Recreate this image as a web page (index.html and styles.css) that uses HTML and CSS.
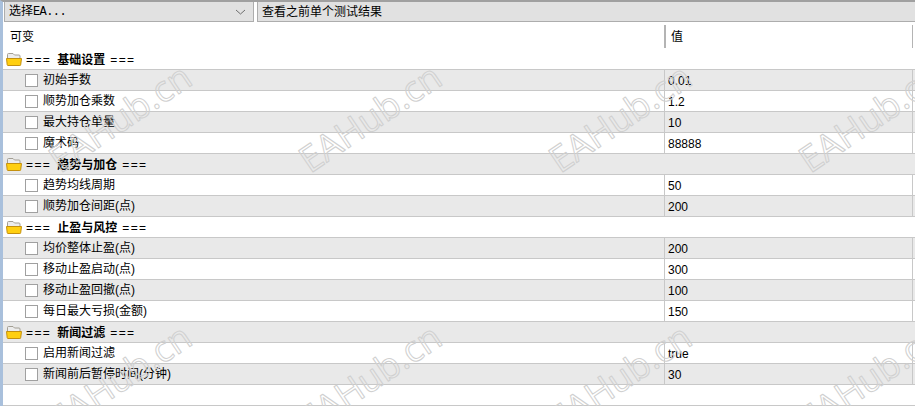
FILE: index.html
```html
<!DOCTYPE html>
<html lang="zh-CN">
<head>
<meta charset="utf-8">
<title>EA</title>
<link rel="stylesheet" href="styles.css">
</head>
<body>
<svg width="0" height="0" class="defs">
  <symbol id="folder" viewBox="0 0 16 13">
    <path d="M1.500 7V1.500a1 1 0 0 1 1-1h4.500l1.500 1.500h4.500a1 1 0 0 1 1 1V7" fill="#ececec" stroke="#a39f94"/>
    <path d="M.5 5.500h15l-.8 6.200a.8.8 0 0 1-.8.8H2a.8.8 0 0 1-.8-.7z" fill="#ffcf10" stroke="#c4900e"/>
  </symbol>
</svg>
<div class="app">
  <div class="toolbar">
    <div class="combo combo-ea"><span>选择<span class="mono">EA...</span></span>
      <svg class="chev" width="11" height="6" viewBox="0 0 11 6"><path d="M1 1l4.500 4L10 1" fill="none" stroke="#6e6e6e"/></svg>
    </div>
    <div class="combo combo-result"><span>查看之前单个测试结果</span></div>
  </div>
  <div class="head">
    <div class="head-name">可变</div>
    <div class="head-val">值</div>
  </div>
  <div class="grid">
    <div class="row group"><svg class="folder"><use href="#folder"/></svg><span class="eq">===</span><b>基础设置</b><span class="eq">===</span></div>
    <div class="row alt"><div class="name"><i class="check"></i>初始手数</div><div class="val">0.01</div></div>
    <div class="row"><div class="name"><i class="check"></i>顺势加仓乘数</div><div class="val">1.2</div></div>
    <div class="row alt"><div class="name"><i class="check"></i>最大持仓单量</div><div class="val">10</div></div>
    <div class="row"><div class="name"><i class="check"></i>魔术码</div><div class="val">88888</div></div>
    <div class="row group alt"><svg class="folder"><use href="#folder"/></svg><span class="eq">===</span><b>趋势与加仓</b><span class="eq">===</span></div>
    <div class="row"><div class="name"><i class="check"></i>趋势均线周期</div><div class="val">50</div></div>
    <div class="row alt"><div class="name"><i class="check"></i>顺势加仓间距(点)</div><div class="val">200</div></div>
    <div class="row group"><svg class="folder"><use href="#folder"/></svg><span class="eq">===</span><b>止盈与风控</b><span class="eq">===</span></div>
    <div class="row alt"><div class="name"><i class="check"></i>均价整体止盈(点)</div><div class="val">200</div></div>
    <div class="row"><div class="name"><i class="check"></i>移动止盈启动(点)</div><div class="val">300</div></div>
    <div class="row alt"><div class="name"><i class="check"></i>移动止盈回撤(点)</div><div class="val">100</div></div>
    <div class="row"><div class="name"><i class="check"></i>每日最大亏损(金额)</div><div class="val">150</div></div>
    <div class="row group alt"><svg class="folder"><use href="#folder"/></svg><span class="eq">===</span><b>新闻过滤</b><span class="eq">===</span></div>
    <div class="row"><div class="name"><i class="check"></i>启用新闻过滤</div><div class="val">true</div></div>
    <div class="row alt"><div class="name"><i class="check"></i>新闻前后暂停时间(分钟)</div><div class="val">30</div></div>
    <div class="row empty"></div>
  </div>
</div>
<svg class="watermark" width="915" height="406" viewBox="0 0 915 406">
  <text transform="translate(60 174) rotate(-34)">EAHub.cn</text>
  <text transform="translate(310 174) rotate(-34)">EAHub.cn</text>
  <text transform="translate(560 174) rotate(-34)">EAHub.cn</text>
  <text transform="translate(810 174) rotate(-34)">EAHub.cn</text>
  <text transform="translate(60 434) rotate(-34)">EAHub.cn</text>
  <text transform="translate(310 434) rotate(-34)">EAHub.cn</text>
  <text transform="translate(560 434) rotate(-34)">EAHub.cn</text>
  <text transform="translate(810 434) rotate(-34)">EAHub.cn</text>
</svg>
</body>
</html>
```
FILE: styles.css
```css
* { box-sizing: border-box; }
html, body { margin: 0; padding: 0; }
body {
  width: 915px;
  height: 406px;
  overflow: hidden;
  position: relative;
  background: #fff;
  color: #000;
  font: 12px/20px "Liberation Sans", "Noto Sans CJK SC", sans-serif;
}
.defs { position: absolute; }
.app {
  display: flex;
  flex-direction: column;
  height: 406px;
  border-top: 2px solid #a0a0a0;
  border-left: 3px solid #a9c0dc;
}
.toolbar {
  display: flex;
  gap: 3px;
  height: 20px;
  padding-left: 1px;
}
.combo {
  display: flex;
  align-items: center;
  justify-content: space-between;
  background: #e1e1e1;
  border: 1px solid #adadad;
  border-top: 0;
  padding-left: 4px;
}
.combo-ea { width: 250px; padding-right: 7px; }
.combo-result { flex: 1; border-right: 0; }
.mono { font-family: "Liberation Mono", monospace; letter-spacing: -0.6px; }
.head {
  display: flex;
  height: 27px;
  padding: 3px 0 1px 1px;
  line-height: 25px;
}
.head-name { width: 662px; padding-left: 6px; border-right: 2px solid #b4b4b4; }
.head-val { width: 247px; padding-left: 5px; border-right: 1px solid #b4b4b4; }
.grid { display: flex; flex-direction: column; }
.row {
  display: flex;
  align-items: stretch;
  height: 21px;
  padding-left: 1px;
  border-bottom: 1px solid #c8c8c8;
  line-height: 22px;
}
.alt { background: #e9e9e9; }
.group { align-items: center; padding: 1px 0 0 3px; }
.group b { font-weight: 700; margin: 0 5px 0 6px; }
.eq { letter-spacing: 1.4px; }
.folder { width: 16px; height: 13px; margin-right: 4px; }
.name {
  display: flex;
  align-items: center;
  width: 661px;
  padding-left: 21px;
  border-right: 1px solid #c8c8c8;
}
.val { width: 248px; padding-left: 3px; border-right: 1px solid #c8c8c8; }
.check {
  display: block;
  width: 13px;
  height: 13px;
  margin-right: 5px;
  background: #fff;
  border: 1px solid #a0a0a0;
}
.watermark {
  position: absolute;
  left: 0;
  top: 0;
  pointer-events: none;
}
.watermark text {
  font: 36px "Open Sans", sans-serif;
  fill: none;
  stroke: #d0d0d0;
  stroke-width: 1;
  stroke-linejoin: round;
}
```
